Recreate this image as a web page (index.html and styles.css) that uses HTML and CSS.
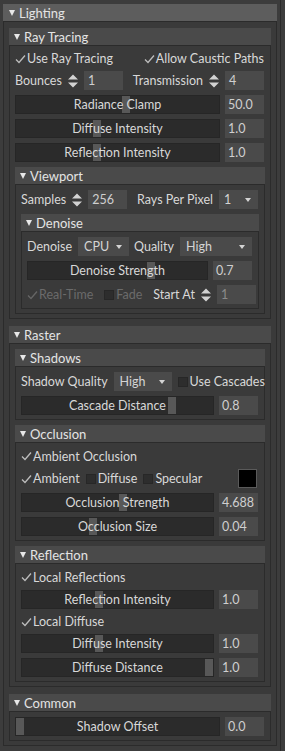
FILE: index.html
```html
<!DOCTYPE html>
<html lang="en">
<head>
    <meta charset="UTF-8">
    <meta name="viewport" content="width=device-width, initial-scale=1.0">
    <title>Lighting</title>
    <link rel="stylesheet" href="styles.css">
</head>
<body>
    <div class="editor">
        <div class="panels">
            <div class="frame">
                <div class="frame-title top-title"><span class="arrow"></span>Lighting</div>
                <div class="frame-body top-body">

                    <div class="frame">
                        <div class="frame-title"><span class="arrow"></span>Ray Tracing</div>
                        <div class="frame-body">
                            <div class="row check-row spread">
                                <span class="check"><svg class="tick" width="11" height="10" viewBox="0 0 11 10"><path d="M1 5.5L4 8.5L10 1.5"/></svg>Use Ray Tracing</span>
                                <span class="check"><svg class="tick" width="11" height="10" viewBox="0 0 11 10"><path d="M1 5.5L4 8.5L10 1.5"/></svg>Allow Caustic Paths</span>
                            </div>
                            <div class="row spread">
                                <div class="group">
                                    <span class="label">Bounces</span>
                                    <svg class="spin" width="10" height="14" viewBox="0 0 10 14"><path d="M0 5.5L5 0.5L10 5.5Z M0 8.5L10 8.5L5 13.5Z"/></svg>
                                    <span class="field">1</span>
                                </div>
                                <div class="group">
                                    <span class="label">Transmission</span>
                                    <svg class="spin" width="10" height="14" viewBox="0 0 10 14"><path d="M0 5.5L5 0.5L10 5.5Z M0 8.5L10 8.5L5 13.5Z"/></svg>
                                    <span class="field">4</span>
                                </div>
                            </div>
                            <div class="row">
                                <div class="slider"><span class="thumb" style="left: 52.4%"></span><span class="slider-label">Radiance Clamp</span></div>
                                <span class="field value">50.0</span>
                            </div>
                            <div class="row">
                                <div class="slider"><span class="thumb" style="left: 37.9%"></span><span class="slider-label">Diffuse Intensity</span></div>
                                <span class="field value">1.0</span>
                            </div>
                            <div class="row">
                                <div class="slider"><span class="thumb" style="left: 37.9%"></span><span class="slider-label">Reflection Intensity</span></div>
                                <span class="field value">1.0</span>
                            </div>

                            <div class="frame">
                                <div class="frame-title"><span class="arrow"></span>Viewport</div>
                                <div class="frame-body">
                                    <div class="row spread">
                                        <div class="group">
                                            <span class="label">Samples</span>
                                            <svg class="spin" width="10" height="14" viewBox="0 0 10 14"><path d="M0 5.5L5 0.5L10 5.5Z M0 8.5L10 8.5L5 13.5Z"/></svg>
                                            <span class="field">256</span>
                                        </div>
                                        <div class="group">
                                            <span class="label">Rays Per Pixel</span>
                                            <span class="combo combo-small">1</span>
                                        </div>
                                    </div>

                                    <div class="frame">
                                        <div class="frame-title"><span class="arrow"></span>Denoise</div>
                                        <div class="frame-body">
                                            <div class="row spread">
                                                <div class="group">
                                                    <span class="label">Denoise</span>
                                                    <span class="combo combo-cpu">CPU</span>
                                                </div>
                                                <div class="group">
                                                    <span class="label">Quality</span>
                                                    <span class="combo combo-quality">High</span>
                                                </div>
                                            </div>
                                            <div class="row">
                                                <div class="slider"><span class="thumb" style="left: 66.5%"></span><span class="slider-label">Denoise Strength</span></div>
                                                <span class="field value">0.7</span>
                                            </div>
                                            <div class="row options wide">
                                                <span class="check disabled"><svg class="tick" width="11" height="10" viewBox="0 0 11 10"><path d="M1 5.5L4 8.5L10 1.5"/></svg>Real-Time</span>
                                                <span class="check disabled"><span class="box"></span>Fade</span>
                                                <div class="group push">
                                                    <span class="label">Start At</span>
                                                    <svg class="spin" width="10" height="14" viewBox="0 0 10 14"><path d="M0 5.5L5 0.5L10 5.5Z M0 8.5L10 8.5L5 13.5Z"/></svg>
                                                    <span class="field dim">1</span>
                                                </div>
                                            </div>
                                        </div>
                                    </div>
                                </div>
                            </div>
                        </div>
                    </div>

                    <div class="frame">
                        <div class="frame-title"><span class="arrow"></span>Raster</div>
                        <div class="frame-body">

                            <div class="frame">
                                <div class="frame-title"><span class="arrow"></span>Shadows</div>
                                <div class="frame-body">
                                    <div class="row group">
                                        <span class="label">Shadow Quality</span>
                                        <span class="combo combo-shadow">High</span>
                                        <span class="check"><span class="box"></span>Use Cascades</span>
                                    </div>
                                    <div class="row">
                                        <div class="slider"><span class="thumb" style="left: 76.7%"></span><span class="slider-label">Cascade Distance</span></div>
                                        <span class="field value">0.8</span>
                                    </div>
                                </div>
                            </div>

                            <div class="frame">
                                <div class="frame-title"><span class="arrow"></span>Occlusion</div>
                                <div class="frame-body">
                                    <div class="row check-row tall">
                                        <span class="check"><svg class="tick" width="11" height="10" viewBox="0 0 11 10"><path d="M1 5.5L4 8.5L10 1.5"/></svg>Ambient Occlusion</span>
                                    </div>
                                    <div class="row options">
                                        <span class="check"><svg class="tick" width="11" height="10" viewBox="0 0 11 10"><path d="M1 5.5L4 8.5L10 1.5"/></svg>Ambient</span>
                                        <span class="check"><span class="box"></span>Diffuse</span>
                                        <span class="check"><span class="box"></span>Specular</span>
                                        <span class="swatch push"></span>
                                    </div>
                                    <div class="row">
                                        <div class="slider"><span class="thumb" style="left: 50.8%"></span><span class="slider-label">Occlusion Strength</span></div>
                                        <span class="field value">4.688</span>
                                    </div>
                                    <div class="row">
                                        <div class="slider"><span class="thumb" style="left: 35.2%"></span><span class="slider-label">Occlusion Size</span></div>
                                        <span class="field value">0.04</span>
                                    </div>
                                </div>
                            </div>

                            <div class="frame">
                                <div class="frame-title"><span class="arrow"></span>Reflection</div>
                                <div class="frame-body">
                                    <div class="row check-row tall">
                                        <span class="check"><svg class="tick" width="11" height="10" viewBox="0 0 11 10"><path d="M1 5.5L4 8.5L10 1.5"/></svg>Local Reflections</span>
                                    </div>
                                    <div class="row">
                                        <div class="slider"><span class="thumb" style="left: 38.3%"></span><span class="slider-label">Reflection Intensity</span></div>
                                        <span class="field value">1.0</span>
                                    </div>
                                    <div class="row check-row">
                                        <span class="check"><svg class="tick" width="11" height="10" viewBox="0 0 11 10"><path d="M1 5.5L4 8.5L10 1.5"/></svg>Local Diffuse</span>
                                    </div>
                                    <div class="row">
                                        <div class="slider"><span class="thumb" style="left: 38.3%"></span><span class="slider-label">Diffuse Intensity</span></div>
                                        <span class="field value">1.0</span>
                                    </div>
                                    <div class="row">
                                        <div class="slider"><span class="thumb" style="left: 95.6%"></span><span class="slider-label">Diffuse Distance</span></div>
                                        <span class="field value">1.0</span>
                                    </div>
                                </div>
                            </div>
                        </div>
                    </div>

                    <div class="frame">
                        <div class="frame-title"><span class="arrow"></span>Common</div>
                        <div class="frame-body">
                            <div class="row">
                                <div class="slider"><span class="thumb" style="left: 0"></span><span class="slider-label">Shadow Offset</span></div>
                                <span class="field value">0.0</span>
                            </div>
                        </div>
                    </div>

                </div>
            </div>
        </div>
        <div class="scrollbar"></div>
    </div>
</body>
</html>
```

FILE: styles.css
```css
body{
    margin: 0;
    background-color: #3c3c3c;
    font-family: Lato, "Open Sans", sans-serif;
    font-size: 12.5px;
    color: #d8d8d8;
}
.editor{
    display: flex;
    height: 751px;
}
.panels{
    width: 274px;
    padding: 4px 3px 0 3px;
}
.scrollbar{
    width: 4px;
    border-left: 1px solid #2a2a2a;
    background-color: #3d3d3d;
}
.frame-title{
    display: flex;
    align-items: center;
    height: 17px;
    padding-left: 5px;
    background-color: #4a4a4a;
    color: #e4e4e4;
    font-size: 13px;
}
.top-title{
    padding-left: 6px;
    background-color: #5d5d5d;
}
.arrow{
    width: 0;
    height: 0;
    border-left: 3.5px solid transparent;
    border-right: 3.5px solid transparent;
    border-top: 6px solid #e8e8e8;
    margin-right: 4px;
}
.frame-body{
    display: flex;
    flex-direction: column;
    gap: 5px;
    border: 1px solid #2b2b2b;
    padding: 5px 5px 4px 5px;
    background-color: #3a3a3a;
}
.top-body{
    padding-top: 6px;
    gap: 7px;
}
.row{
    display: flex;
    align-items: center;
    height: 19px;
    white-space: nowrap;
}
.check-row{
    height: 15px;
}
.tall{
    height: 16px;
}
.spread{
    justify-content: space-between;
    padding-right: 1px;
}
.group{
    display: flex;
    align-items: center;
    gap: 6px;
}
.options{
    gap: 6px;
}
.wide{
    gap: 11px;
}
.push{
    margin-left: auto;
}
.check{
    display: flex;
    align-items: center;
}
.tick{
    margin-right: 1px;
    fill: none;
    stroke: #bdbdbd;
    stroke-width: 1.3;
}
.box{
    width: 10px;
    height: 10px;
    box-sizing: border-box;
    margin-right: 2px;
    background-color: #2d2d2d;
    border: 1px solid #272727;
}
.disabled{
    color: #6b6b6b;
}
.disabled .tick{
    stroke: #666666;
}
.spin{
    flex-shrink: 0;
    fill: #d2d2d2;
}
.field{
    flex-shrink: 0;
    width: 39px;
    height: 19px;
    box-sizing: border-box;
    padding-left: 4px;
    line-height: 19px;
    background-color: #4a4a4a;
    color: #cfcfcf;
}
.dim{
    color: #8a8a8a;
}
.value{
    margin-left: 5px;
    margin-right: 1px;
    padding-left: 3px;
}
.slider{
    position: relative;
    flex: 1;
    height: 19px;
    box-sizing: border-box;
    border: 1px solid #262626;
    background-color: #2b2b2b;
    text-align: center;
    line-height: 17px;
}
.thumb{
    position: absolute;
    top: 0;
    bottom: 0;
    width: 8px;
    background-color: #585858;
}
.slider-label{
    position: relative;
}
.combo{
    flex-shrink: 0;
    display: flex;
    align-items: center;
    justify-content: space-between;
    height: 19px;
    box-sizing: border-box;
    padding: 0 7px 0 6px;
    background-color: #4a4a4a;
    color: #d4d4d4;
}
.combo::after{
    content: "";
    border-left: 3.5px solid transparent;
    border-right: 3.5px solid transparent;
    border-top: 4px solid #d4d4d4;
}
.combo-small{
    width: 39px;
    padding-left: 5px;
}
.combo-cpu{
    width: 51px;
}
.combo-quality{
    width: 72px;
}
.combo-shadow{
    width: 58px;
}
.swatch{
    width: 19px;
    height: 19px;
    box-sizing: border-box;
    margin-right: 2px;
    background-color: #000000;
    border: 1px solid #5a5a5a;
}
```
